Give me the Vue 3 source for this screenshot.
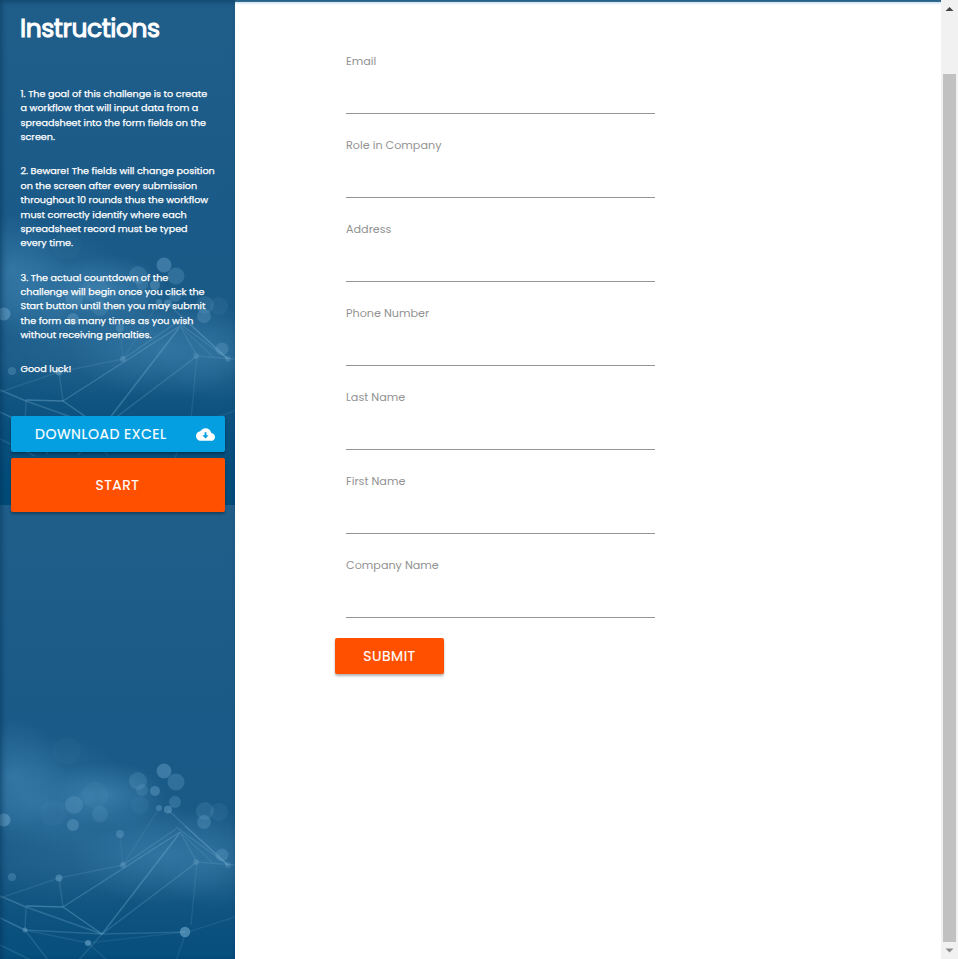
<script setup>
const fields = ['Email', 'Role in Company', 'Address', 'Phone Number', 'Last Name', 'First Name', 'Company Name']

const paragraphs = [
  ['1. The goal of this challenge is to create', 'a workflow that will input data from a', 'spreadsheet into the form fields on the', 'screen.'],
  ['2. Beware! The fields will change position', 'on the screen after every submission', 'throughout 10 rounds thus the workflow', 'must correctly identify where each', 'spreadsheet record must be typed', 'every time.'],
  ['3. The actual countdown of the', 'challenge will begin once you click the', 'Start button until then you may submit', 'the form as many times as you wish', 'without receiving penalties.'],
  ['Good luck!'],
]

// x, y, radius, opacity
const bokeh = [
  [67, 246, 14, 0.04], [95, 290, 13, 0.07], [86, 292, 8, 0.06], [53, 308, 13, 0.06],
  [74, 300, 9, 0.22], [73, 320, 6, 0.32], [100, 309, 8, 0.16], [138, 276, 9, 0.2],
  [142, 285, 6, 0.18], [155, 286, 5, 0.35], [164, 266, 7.5, 0.37], [176, 277, 8.5, 0.25],
  [175, 297, 6, 0.25], [168, 304.5, 4, 0.38], [159, 303, 3, 0.34], [140, 300, 9, 0.08],
  [120, 329, 4, 0.3], [4, 315, 6.5, 0.45], [205, 306, 9, 0.16], [204, 317, 7, 0.26],
  [219, 307, 9, 0.1], [222, 350, 6.5, 0.24], [228, 360, 3, 0.25], [123, 360, 3, 0.3],
  [12, 372, 4, 0.28], [59, 373, 3.5, 0.42], [25, 425, 2.5, 0.4], [88, 438, 3, 0.55],
  [185, 427, 5.2, 0.55], [196, 357, 3, 0.22],
]

// x1, y1, x2, y2, opacity
const links = [
  [0, 393, 59, 373, 0.15], [59, 373, 123, 360, 0.16], [59, 373, 63, 402, 0.2],
  [0, 391, 26, 402, 0.32], [26, 401, 63, 402, 0.38], [26, 402, 25, 425, 0.2],
  [26, 402, 102, 429, 0.28], [63, 402, 102, 429, 0.36], [63, 402, 180, 327, 0.3],
  [102, 429, 179, 329, 0.34], [102, 429, 197, 357, 0.24], [25, 425, 102, 429, 0.24],
  [102, 429, 185, 427, 0.22], [0, 413, 25, 425, 0.33], [25, 425, 48, 455, 0.2],
  [25, 425, 88, 438, 0.15], [102, 429, 78, 456, 0.2], [88, 438, 108, 456, 0.14],
  [0, 440, 35, 457, 0.2], [123, 360, 176, 324, 0.22], [123, 360, 158, 305, 0.1],
  [120, 329, 123, 360, 0.1], [176, 322, 228, 360, 0.22], [168, 305, 228, 360, 0.22],
  [180, 327, 197, 357, 0.2], [180, 327, 212, 357, 0.14], [185, 321, 228, 360, 0.2],
  [197, 357, 191, 420, 0.14], [197, 357, 235, 360, 0.18], [188, 427, 235, 412, 0.12],
  [88, 438, 185, 427, 0.12], [185, 430, 174, 462, 0.14],
]
</script>

<template>
  <div class="page">
    <aside class="sidebar">
      <svg class="backdrop" width="235" height="959" viewBox="0 0 235 959" aria-hidden="true">
        <defs>
          <linearGradient id="sky" x1="0" y1="0" x2="0" y2="1">
            <stop offset="0" stop-color="#205e8a" />
            <stop offset=".48" stop-color="#1a5a88" />
            <stop offset=".72" stop-color="#195985" />
            <stop offset=".86" stop-color="#09507e" />
            <stop offset="1" stop-color="#004b78" />
          </linearGradient>
          <radialGradient id="glow">
            <stop offset="0" stop-color="#549ac8" stop-opacity=".5" />
            <stop offset=".5" stop-color="#4f95c4" stop-opacity=".28" />
            <stop offset="1" stop-color="#4f95c4" stop-opacity="0" />
          </radialGradient>
          <symbol id="tile" width="235" height="506" viewBox="0 0 235 506">
            <rect width="235" height="506" fill="url(#sky)" />
            <ellipse cx="12" cy="270" rx="52" ry="56" fill="url(#glow)" opacity=".75" />
            <ellipse cx="60" cy="270" rx="60" ry="40" fill="url(#glow)" opacity=".35" />
            <ellipse cx="40" cy="300" rx="80" ry="42" fill="url(#glow)" opacity=".55" />
            <ellipse cx="108" cy="290" rx="58" ry="34" fill="url(#glow)" opacity=".9" />
            <ellipse cx="80" cy="335" rx="120" ry="65" fill="url(#glow)" opacity=".4" />
            <ellipse cx="160" cy="350" rx="90" ry="50" fill="url(#glow)" opacity=".75" />
            <ellipse cx="215" cy="355" rx="60" ry="50" fill="url(#glow)" opacity=".5" />
            <g stroke="#7eb7d9">
              <line v-for="(l, i) in links" :key="i" :x1="l[0]" :y1="l[1]" :x2="l[2]" :y2="l[3]" :stroke-opacity="l[4]" stroke-width="1.4" />
            </g>
            <g fill="#79b2d5">
              <circle v-for="(c, i) in bokeh" :key="i" :cx="c[0]" :cy="c[1]" :r="c[2]" :fill-opacity="c[3]" />
            </g>
          </symbol>
        </defs>
        <use href="#tile" x="0" y="-1" />
        <use href="#tile" x="0" y="505" />
      </svg>
      <div class="content">
        <h1>Instructions</h1>
        <div class="steps">
          <p v-for="(lines, i) in paragraphs" :key="i">
            <span v-for="line in lines" :key="line">{{ line }}</span>
          </p>
        </div>
        <div class="actions">
          <a class="btn download">
            <span>DOWNLOAD EXCEL</span>
            <svg width="19" height="19" viewBox="0 0 24 24" aria-hidden="true">
              <path fill="#fff" fill-rule="evenodd" d="M19.35 10.04C18.67 6.59 15.64 4 12 4 9.11 4 6.6 5.64 5.35 8.04 2.34 8.36 0 10.91 0 14c0 3.31 2.69 6 6 6h13c2.76 0 5-2.24 5-5 0-2.64-2.05-4.78-4.65-4.96zM16 13l-4 4-4-4h2.8V9h2.4v4z" />
            </svg>
          </a>
          <button class="btn start">START</button>
        </div>
      </div>
    </aside>
    <main class="main">
      <form class="form">
        <div v-for="field in fields" :key="field" class="field">
          <label>{{ field }}</label>
          <div class="input"></div>
        </div>
        <button type="button" class="btn submit">SUBMIT</button>
      </form>
    </main>
    <div class="scrollbar">
      <svg width="17" height="17" viewBox="0 0 17 17"><path d="M4.5 11 8.5 7l4 4z" fill="#444" /></svg>
      <div class="thumb"></div>
      <svg width="17" height="17" viewBox="0 0 17 17"><path d="M4.5 6.5h8l-4 4z" fill="#8c8c8c" /></svg>
    </div>
  </div>
</template>

<style>
body {
  margin: 0;
  overflow: hidden;
}
</style>

<style scoped>
.page {
  display: flex;
  width: 958px;
  height: 959px;
  overflow: hidden;
  background: #fff;
  font-family: Poppins, Inter, sans-serif;
}
.sidebar {
  position: relative;
  width: 235px;
  flex: none;
  overflow: hidden;
}
.sidebar::after {
  content: '';
  position: absolute;
  inset: 0;
  box-shadow: inset 2px 2px 5px rgba(0, 45, 80, 0.5);
  pointer-events: none;
}
.backdrop {
  position: absolute;
  inset: 0;
}
.content {
  position: relative;
  padding: 10px 10px 0 11px;
  color: #fff;
}
h1 {
  margin: 0 0 0 9px;
  height: 77px;
  font-size: 25px;
  line-height: 37px;
  font-weight: 400;
  letter-spacing: -0.45px;
  -webkit-text-stroke: 1px #fff;
}
.steps {
  height: 329px;
  margin-left: 9.5px;
  font-size: 9.6px;
  line-height: 14.4px;
  font-weight: 400;
  -webkit-text-stroke: 0.25px #fff;
}
p {
  margin: 0 0 19.8px;
}
p span {
  display: block;
  white-space: nowrap;
}
.btn {
  display: flex;
  align-items: center;
  justify-content: center;
  box-sizing: border-box;
  margin: 0;
  padding: 0;
  border: 0;
  border-radius: 2px;
  background: #ff5000;
  color: #fff;
  font-family: inherit;
  font-size: 14px;
  font-weight: 400;
  letter-spacing: 0.5px;
  white-space: nowrap;
  -webkit-text-stroke: 0.15px #fff;
  box-shadow: 0 2px 2px rgba(0, 0, 0, 0.14), 0 2px 3px rgba(0, 0, 0, 0.18);
}
.actions {
  display: grid;
  gap: 6px;
}
.download {
  height: 36px;
  justify-content: space-between;
  padding: 0 10px 0 24px;
  background: #039fe1;
}
.start {
  height: 54px;
  padding-right: 1px;
}
.main {
  width: 706px;
  box-sizing: border-box;
  padding: 52px 0 0 100px;
  background: linear-gradient(#1f5d87 0, #3f7195 2px, #c9e2f1 2px, #fff 5px);
}
.field {
  width: 309px;
  height: 84px;
  margin-left: 11px;
}
label {
  display: block;
  height: 18px;
  color: #929292;
  font-size: 11.2px;
  line-height: 19px;
}
.input {
  height: 43px;
  border-bottom: 1px solid #949498;
}
.submit {
  width: 109px;
  height: 36px;
  margin-top: -2px;
}
.scrollbar {
  display: flex;
  flex-direction: column;
  align-items: center;
  width: 17px;
  background: #f1f1f1;
}
.scrollbar svg {
  flex: none;
}
.thumb {
  flex: 1;
  width: 13px;
  margin-top: 57px;
  background: #c1c1c1;
}
</style>
